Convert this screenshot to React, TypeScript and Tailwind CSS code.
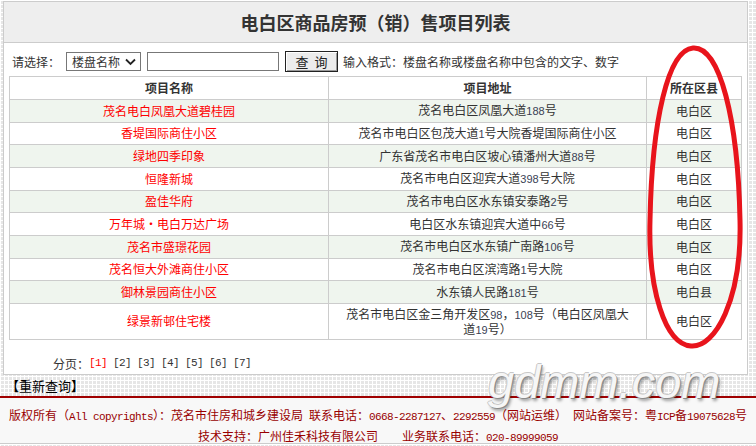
import React from 'react';

const rows = [
  { name: '茂名电白凤凰大道碧桂园', addr: '茂名电白区凤凰大道188号', area: '电白区' },
  { name: '香堤国际商住小区', addr: '茂名市电白区包茂大道1号大院香堤国际商住小区', area: '电白区' },
  { name: '绿地四季印象', addr: '广东省茂名市电白区坡心镇潘州大道88号', area: '电白区' },
  { name: '恒隆新城', addr: '茂名市电白区迎宾大道398号大院', area: '电白区' },
  { name: '盈佳华府', addr: '茂名市电白区水东镇安泰路2号', area: '电白区' },
  { name: '万年城·电白万达广场', addr: '电白区水东镇迎宾大道中66号', area: '电白区' },
  { name: '茂名市盛璟花园', addr: '茂名市电白区水东镇广南路106号', area: '电白区' },
  { name: '茂名恒大外滩商住小区', addr: '茂名市电白区滨湾路1号大院', area: '电白区' },
  { name: '御林景园商住小区', addr: '水东镇人民路181号', area: '电白县' },
];

// digits in the address column use a narrower latin face
const Addr = ({ text }: { text: string }) => (
  <>
    {text.split(/(\d+)/).map((part, i) =>
      /^\d+$/.test(part) ? (
        <span key={i} className="font-['Liberation_Sans'] text-[11px] text-[#3a3f55]">
          {part}
        </span>
      ) : (
        <span key={i}>{part}</span>
      )
    )}
  </>
);

const Mono = ({ children }: { children: React.ReactNode }) => (
  <span className="font-['Liberation_Mono'] text-[11px] tracking-[-0.6px]">{children}</span>
);

const cell = 'border border-[#cccccc] text-center align-middle p-0';

export default function App() {
  return (
    <div className="relative w-[756px] h-[446px] overflow-hidden bg-[#e6e6e6] [background-image:linear-gradient(90deg,#fff_1px,transparent_1px),linear-gradient(#fff_1px,transparent_1px)] [background-size:4px_4px] font-['Noto_Sans_CJK_SC',sans-serif] text-[12px] text-[#333] leading-none pt-[1px]">
      {/* main panel */}
      <div className="ml-[3px] w-[745px] h-[374px] border border-[#cccccc] bg-white">
        <div className="h-[41px] bg-[#eeeeee] border-b border-[#cccccc] flex items-center justify-center text-[18px] font-bold text-[#333]">
          电白区商品房预（销）售项目列表
        </div>

        <div className="flex items-center h-[21px] mt-[8px] pl-[8px]">
          <span>请选择：</span>
          <div className="ml-[6px] w-[75px] h-[19px] border border-[#777] flex items-center justify-between pl-[5px] pr-[4px] bg-white">
            <span>楼盘名称</span>
            <svg width="11" height="8" viewBox="0 0 11 8">
              <path d="M1 1.5 L5.5 6 L10 1.5" fill="none" stroke="#222" strokeWidth="1.8" />
            </svg>
          </div>
          <input
            readOnly
            className="ml-[6px] w-[132px] h-[19px] border border-[#777] bg-white outline-none"
          />
          <div className="ml-[6px] w-[53px] h-[21px] border border-[#222] bg-[#ececec] shadow-[inset_1px_1px_0_#fff,inset_-1px_-1px_0_#999] flex items-center justify-center text-[13px] text-[#222] tracking-[6px] pl-[6px]">
            查询
          </div>
          <span className="ml-[5px]">输入格式：楼盘名称或楼盘名称中包含的文字、数字</span>
        </div>

        <table className="ml-[5px] mt-[4px] w-[732px] border-collapse table-fixed">
          <colgroup>
            <col className="w-[319px]" />
            <col className="w-[318px]" />
            <col className="w-[95px]" />
          </colgroup>
          <thead>
            <tr className="h-[23px] bg-white">
              <th className={`${cell} font-bold`}>项目名称</th>
              <th className={`${cell} font-bold`}>项目地址</th>
              <th className={`${cell} font-bold`}>所在区县</th>
            </tr>
          </thead>
          <tbody>
            {rows.map((r, i) => (
              <tr key={r.name} className={`h-[22.67px] ${i % 2 === 0 ? 'bg-[#eff5ee]' : 'bg-white'}`}>
                <td className={`${cell} text-[#ff0000]`}>{r.name}</td>
                <td className={cell}>
                  <Addr text={r.addr} />
                </td>
                <td className={cell}>{r.area}</td>
              </tr>
            ))}
            <tr className="h-[36px] bg-white">
              <td className={`${cell} text-[#ff0000]`}>绿景新邨住宅楼</td>
              <td className={cell}>
                <div className="h-[15px] leading-[15px]">
                  <Addr text="茂名市电白区金三角开发区98，108号（电白区凤凰大" />
                </div>
                <div className="h-[15px] leading-[15px]">
                  <Addr text="道19号）" />
                </div>
              </td>
              <td className={cell}>电白区</td>
            </tr>
          </tbody>
        </table>

        <div className="mt-[18px] pl-[49px] flex items-center">
          <span>分页：</span>
          <span className="font-['Liberation_Mono'] text-[11px] tracking-[-0.6px] whitespace-pre text-[#333]">
            <span className="text-[#ff0000]">[1]</span> [2] [3] [4] [5] [6] [7]
          </span>
        </div>
      </div>

      <div className="h-[21px] flex items-center pl-[6px] text-[13px] text-black">【重新查询】</div>

      <div className="border-t-2 border-[#a00000] bg-[#f8f8f8] h-[48px] border-b border-b-[#cccccc] text-[#990000] flex flex-col items-center pt-[10px] gap-[8px]">
        <div className="whitespace-nowrap h-[13px] leading-[13px]">
          版权所有（<Mono>All copyrights</Mono>）：茂名市住房和城乡建设局<Mono> </Mono>联系电话：
          <Mono>0668-2287127</Mono>、<Mono>2292559</Mono>（网站运维）<Mono> </Mono>网站备案号：粤<Mono>ICP</Mono>备
          <Mono>19075628</Mono>号
        </div>
        <div className="whitespace-nowrap h-[13px] leading-[13px]">
          技术支持：广州佳禾科技有限公司　　业务联系电话：<Mono>020-89999059</Mono>
        </div>
      </div>

      {/* watermark */}
      <div className="absolute left-[488px] top-[358px] font-['Liberation_Sans'] italic text-[47px] leading-none text-[#f6f6f6] [text-shadow:1px_1px_0_#8a8a8a,-1px_0_0_#c8c8c8,0_-1px_0_#c8c8c8,2px_3px_3px_rgba(0,0,0,0.35)] pointer-events-none">
        gdmm.com
      </div>

      {/* red annotation */}
      <svg className="absolute left-0 top-0 pointer-events-none" width="756" height="446" viewBox="0 0 756 446">
        <path
          d="M693 48 C720 46 738 120 740 220 C742 300 715 348 691 346 C665 344 648 290 650 220 C652 120 668 50 693 48 Z"
          fill="none"
          stroke="#e8141c"
          strokeWidth="5"
        />
      </svg>
    </div>
  );
}
